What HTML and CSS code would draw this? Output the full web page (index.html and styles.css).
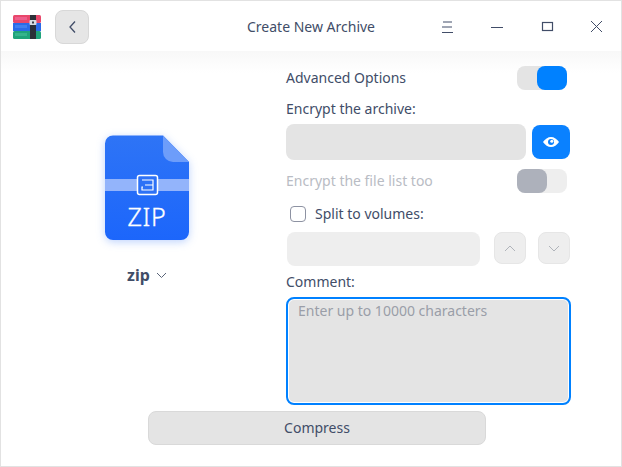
FILE: index.html
```html
<!DOCTYPE html>
<html lang="en">
<head>
  <meta charset="UTF-8">
  <title>Create New Archive</title>
  <link rel="stylesheet" href="styles.css">
</head>
<body>
  <div class="window">
    <div class="titlebar">
      <svg class="app-icon" width="30" height="26" viewBox="0 0 30 26">
        <rect x="0" y="1" width="28" height="8" rx="1.5" fill="#e8476b"/>
        <rect x="2" y="3" width="12" height="3" fill="#ee5f8c"/>
        <rect x="0" y="9" width="28" height="8" fill="#2a6ae8"/>
        <rect x="2" y="11" width="12" height="3" fill="#3f7ff0"/>
        <rect x="0" y="17" width="28" height="8" rx="1.5" fill="#1fa37a"/>
        <rect x="2" y="19" width="12" height="3" fill="#35b48c"/>
        <rect x="17" y="1" width="6" height="24" fill="#2c3038"/>
        <rect x="16.500" y="6" width="7" height="5" rx="1" fill="#d8dce2"/>
        <rect x="19" y="7.500" width="2" height="2" fill="#3a3f48"/>
      </svg>
      <button class="back-btn">
        <svg width="10" height="14" viewBox="0 0 10 14"><path d="M8 1.500 3 7l5 5.500" fill="none" stroke="#414d68" stroke-width="1.300"/></svg>
      </button>
      <div class="title">Create New Archive</div>
      <div class="win-controls">
        <svg width="16" height="14" viewBox="0 0 16 14"><path d="M3 2h9M2 7h10M2 12.500h11" stroke="#414d68" fill="none"/></svg>
        <svg width="16" height="14" viewBox="0 0 16 14"><path d="M1 7.500h12" stroke="#414d68" fill="none"/></svg>
        <svg width="16" height="14" viewBox="0 0 16 14"><rect x="2.500" y="2.500" width="10" height="8" stroke="#414d68" stroke-width="1.200" fill="none"/></svg>
        <svg width="16" height="14" viewBox="0 0 16 14"><path d="M1 1l11 11M12 1 1 12" stroke="#414d68" fill="none"/></svg>
      </div>
    </div>

    <div class="content">
      <div class="left">
        <svg class="zip-icon" width="100" height="120" viewBox="0 0 100 120">
          <defs>
            <linearGradient id="zipbg" x1="0" y1="0" x2="0" y2="1">
              <stop offset="0" stop-color="#2e74f6"/>
              <stop offset="1" stop-color="#1c66fb"/>
            </linearGradient>
          </defs>
          <path d="M12 5.500h50l26 26.500v70a8 8 0 0 1-8 8H12a8 8 0 0 1-8-8V13.500a8 8 0 0 1 8-8z" fill="url(#zipbg)"/>
          <path d="M62 5.500l26 26.500H72a10 10 0 0 1-10-10z" fill="#6d9dfa"/>
          <rect x="4" y="49" width="84" height="12" fill="#93b4fb"/>
          <rect x="36.500" y="45.500" width="20" height="19" rx="2" fill="#2e72f6" stroke="#fff" stroke-width="1.500"/>
          <path d="M41 50h11v10H41V57h1M44 55h8" fill="none" stroke="#fff" stroke-width="1.200"/>
        </svg>
        <div class="zip-label">ZIP</div>
        <div class="format">
          <span>zip</span>
          <svg width="11" height="7" viewBox="0 0 11 7"><path d="M1 1l4.500 4.500L10 1" fill="none" stroke="#5a6478"/></svg>
        </div>
      </div>

      <div class="right">
        <div class="row adv-row">
          <span class="text">Advanced Options</span>
          <div class="switch on"><div class="knob"></div></div>
        </div>
        <div class="text label-encrypt">Encrypt the archive:</div>
        <div class="password-row">
          <div class="input password"></div>
          <button class="eye-btn">
            <svg width="18" height="12" viewBox="0 0 18 12">
              <path d="M1 6c2-3 5-5 8-5s6 2 8 5c-2 3-5 5-8 5S3 9 1 6z" fill="#fff"/>
              <circle cx="9" cy="6" r="3" fill="#0a81ff"/>
              <circle cx="9.800" cy="5.200" r="1.500" fill="#fff"/>
            </svg>
          </button>
        </div>
        <div class="row list-row">
          <span class="text muted">Encrypt the file list too</span>
          <div class="switch off"><div class="knob"></div></div>
        </div>
        <div class="split-row">
          <div class="checkbox"></div>
          <span class="text">Split to volumes:</span>
        </div>
        <div class="volume-row">
          <div class="input volume"></div>
          <button class="spin">
            <svg width="12" height="7" viewBox="0 0 12 7"><path d="M1 6l5-5 5 5" fill="none" stroke="#b0b4ba"/></svg>
          </button>
          <button class="spin">
            <svg width="12" height="7" viewBox="0 0 12 7"><path d="M1 1l5 5 5-5" fill="none" stroke="#b0b4ba"/></svg>
          </button>
        </div>
        <div class="text label-comment">Comment:</div>
        <div class="comment">Enter up to 10000 characters</div>
      </div>
    </div>

    <button class="compress">Compress</button>
  </div>
</body>
</html>
```

FILE: styles.css
```css
* {
  box-sizing: border-box;
}

body {
  margin: 0;
  font-family: "Noto Sans", sans-serif;
  font-size: 14px;
  color: #414d68;
  background: #fff;
}

button {
  font-family: inherit;
  padding: 0;
}

.window {
  position: relative;
  width: 622px;
  height: 467px;
  border: 1px solid #e2e2e2;
  background: linear-gradient(to bottom, #f8f8f8 50px, #fff 72px);
}

.titlebar {
  display: flex;
  align-items: center;
  height: 50px;
  background: #fff;
}

.app-icon {
  margin-left: 12px;
  margin-top: 1px;
}

.back-btn {
  display: flex;
  align-items: center;
  justify-content: center;
  width: 34px;
  height: 34px;
  margin-left: 12px;
  margin-top: 1px;
  border: 1px solid #d8d8d8;
  border-radius: 8px;
  background: #e6e6e6;
}

.title {
  width: 220px;
  margin-left: 112px;
  text-align: center;
  color: #414d68;
}

.win-controls {
  display: flex;
  gap: 34px;
  margin-left: 19px;
  margin-top: 2px;
}

.content {
  display: flex;
  height: 354px;
}

.left {
  position: relative;
  width: 285px;
  padding-top: 79px;
  padding-left: 100px;
}

.zip-icon {
  display: block;
  filter: drop-shadow(0 2px 4px rgba(40, 110, 250, 0.3));
}

.zip-label {
  position: absolute;
  left: 104px;
  top: 150px;
  width: 84px;
  text-align: center;
  font-size: 25px;
  font-weight: 300;
  letter-spacing: 0.7px;
  line-height: 30px;
  color: #fff;
  -webkit-text-stroke: 0.3px #fff;
}

.format {
  display: flex;
  align-items: center;
  gap: 6px;
  margin-top: 13px;
  padding-left: 26px;
  font-size: 16px;
  font-weight: 700;
  line-height: 24px;
  color: #414d68;
}

.right {
  width: 285px;
  padding-top: 15px;
}

.text {
  line-height: 20px;
}

.muted {
  color: #b9bcc4;
}

.row {
  display: flex;
  justify-content: space-between;
  align-items: center;
  height: 24px;
  padding-right: 4px;
}

.switch {
  display: flex;
  width: 50px;
  height: 24px;
  border-radius: 8px;
}

.switch .knob {
  height: 24px;
  border-radius: 8px;
}

.switch.on {
  justify-content: flex-end;
  background: #e4e4e4;
}

.switch.on .knob {
  width: 30px;
  background: #0081ff;
}

.switch.off {
  background: #eeeeee;
}

.switch.off .knob {
  width: 30px;
  background: #adb1bb;
}

.label-encrypt {
  margin-top: 9px;
}

.password-row {
  display: flex;
  align-items: center;
  gap: 6px;
  margin-top: 5px;
}

.input {
  border-radius: 8px;
}

.input.password {
  width: 240px;
  height: 36px;
  background: #e4e4e4;
}

.eye-btn {
  display: flex;
  align-items: center;
  justify-content: center;
  width: 38px;
  height: 34px;
  border: none;
  border-radius: 8px;
  background: #0a81ff;
}

.list-row {
  margin-top: 9px;
}

.split-row {
  display: flex;
  align-items: center;
  gap: 9px;
  height: 20px;
  margin-top: 11px;
  padding-left: 4px;
}

.checkbox {
  width: 16px;
  height: 16px;
  border: 1.500px solid #8d92a2;
  border-radius: 4px;
}

.volume-row {
  display: flex;
  align-items: flex-start;
  gap: 12px;
  margin-top: 8px;
  padding-left: 1px;
}

.input.volume {
  flex-shrink: 0;
  width: 193px;
  height: 34px;
  margin-right: 2px;
  background: #eeeeee;
}

.spin {
  display: flex;
  flex-shrink: 0;
  align-items: center;
  justify-content: center;
  width: 32px;
  height: 32px;
  border: 1px solid #e6e6e6;
  border-radius: 8px;
  background: #eeeeee;
}

.label-comment {
  margin-top: 6px;
}

.comment {
  width: 285px;
  height: 108px;
  margin-top: 5px;
  padding: 2px 10px;
  border: 2px solid #0081ff;
  border-radius: 8px;
  box-shadow: inset 0 0 0 1px #fff;
  background: #e4e4e4;
  color: #9a9ea8;
  line-height: 20px;
}

.compress {
  display: block;
  width: 338px;
  height: 34px;
  margin-left: 147px;
  margin-top: 6px;
  padding-bottom: 2px;
  border: 1px solid #d9d9d9;
  border-radius: 8px;
  background: #e4e4e4;
  color: #414d68;
  font-size: 14px;
}
```
